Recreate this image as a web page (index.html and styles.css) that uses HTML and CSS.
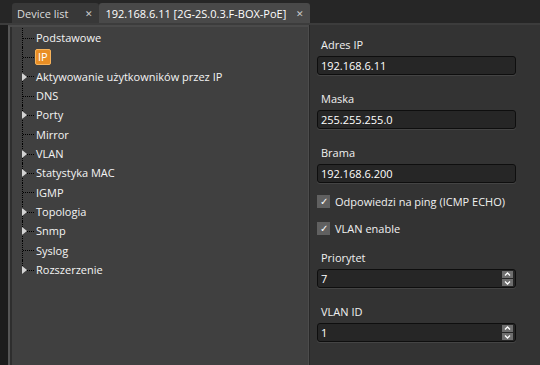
FILE: index.html
```html
<!DOCTYPE html>
<html lang="pl">
<head>
  <meta charset="UTF-8">
  <title>192.168.6.11</title>
  <link rel="stylesheet" href="styles.css">
</head>
<body>
  <div class="tabs">
    <div class="tab">Device list <span class="close">&#x2715;</span></div>
    <div class="tab active">192.168.6.11 [2G-2S.0.3.F-BOX-PoE] <span class="close">&#x2715;</span></div>
  </div>

  <div class="main">
    <div class="frame">
      <ul class="tree">
        <li class="leaf"><span class="label">Podstawowe</span></li>
        <li class="leaf"><span class="label selected">IP</span></li>
        <li class="node"><span class="label">Aktywowanie użytkowników przez IP</span></li>
        <li class="leaf"><span class="label">DNS</span></li>
        <li class="node"><span class="label">Porty</span></li>
        <li class="leaf"><span class="label">Mirror</span></li>
        <li class="node"><span class="label">VLAN</span></li>
        <li class="node"><span class="label">Statystyka MAC</span></li>
        <li class="leaf"><span class="label">IGMP</span></li>
        <li class="node"><span class="label">Topologia</span></li>
        <li class="node"><span class="label">Snmp</span></li>
        <li class="leaf"><span class="label">Syslog</span></li>
        <li class="node last"><span class="label">Rozszerzenie</span></li>
      </ul>
    </div>

    <div class="form">
      <div class="field">
        <label>Adres IP</label>
        <div class="input">192.168.6.11</div>
      </div>
      <div class="field">
        <label>Maska</label>
        <div class="input">255.255.255.0</div>
      </div>
      <div class="field">
        <label>Brama</label>
        <div class="input">192.168.6.200</div>
      </div>
      <div class="checks">
        <div class="check"><span class="box">&#x2713;</span>Odpowiedzi na ping (ICMP ECHO)</div>
        <div class="check"><span class="box">&#x2713;</span>VLAN enable</div>
      </div>
      <div class="field">
        <label>Priorytet</label>
        <div class="input">7
          <span class="arrows">
            <svg width="11" height="7" viewBox="0 0 11 7"><rect width="11" height="7" fill="#6e6e6e"/><path d="M3 4.5 L5.5 2 L8 4.5" fill="none" stroke="#fff" stroke-width="1.3"/></svg>
            <svg width="11" height="7" viewBox="0 0 11 7"><rect width="11" height="7" fill="#6e6e6e"/><path d="M3 2.5 L5.5 5 L8 2.5" fill="none" stroke="#fff" stroke-width="1.3"/></svg>
          </span>
        </div>
      </div>
      <div class="field last">
        <label>VLAN ID</label>
        <div class="input">1
          <span class="arrows">
            <svg width="11" height="7" viewBox="0 0 11 7"><rect width="11" height="7" fill="#6e6e6e"/><path d="M3 4.5 L5.5 2 L8 4.5" fill="none" stroke="#fff" stroke-width="1.3"/></svg>
            <svg width="11" height="7" viewBox="0 0 11 7"><rect width="11" height="7" fill="#6e6e6e"/><path d="M3 2.5 L5.5 5 L8 2.5" fill="none" stroke="#fff" stroke-width="1.3"/></svg>
          </span>
        </div>
      </div>
    </div>
  </div>
</body>
</html>
```

FILE: styles.css
```css
* {
  margin: 0;
  padding: 0;
  box-sizing: border-box;
}

body {
  width: 540px;
  height: 365px;
  overflow: hidden;
  background: #1c1c1c;
  color: #f0f0f0;
  font-family: "Open Sans", "Noto Sans", sans-serif;
  font-size: 11px;
}

/* Tab strip */
.tabs {
  display: flex;
  align-items: flex-end;
  height: 23px;
  padding-left: 12px;
  background: #262626;
}

.tab {
  display: flex;
  align-items: center;
  height: 20px;
  padding: 0 6px 0 5px;
  background: #383838;
  color: #dcdcdc;
  border-radius: 3px 3px 0 0;
  white-space: nowrap;
}

.tab.active {
  background: #494949;
  color: #fff;
  padding: 0 6px 0 6px;
}

.close {
  margin-left: 17px;
  font-size: 9px;
  color: #c8c8c8;
}

.tab.active .close {
  margin-left: 10px;
}

/* Main area */
.main {
  display: flex;
  height: 342px;
  padding-left: 8px;
  border-top: 2px solid #3c3c3c;
}

.frame {
  width: 301px;
  background: #404040;
  border-left: 2px solid #555;
  border-top: 2px solid #4a4a4a;
  padding-left: 2px;
  box-shadow: inset 2px 0 0 #2e2e2e, inset -1px 0 0 #4c4c4c;
}

.tree {
  list-style: none;
  padding: 1px 0 0 10px;
}

.tree li {
  position: relative;
  height: 19.35px;
  line-height: 19px;
  padding-left: 13px;
}

/* dotted connector lines */
.tree li::before {
  content: "";
  position: absolute;
  left: 0;
  top: 0;
  bottom: 0;
  border-left: 1px dotted #000;
}

.tree li.last::before {
  bottom: 50%;
}

.tree li::after {
  content: "";
  position: absolute;
  left: 1px;
  width: 11px;
  top: 50%;
  border-top: 1px dotted #000;
}

.tree li.node .label::before {
  content: "";
  position: absolute;
  left: 0;
  top: 6px;
  border-left: 5px solid #d4d4d4;
  border-top: 4px solid transparent;
  border-bottom: 4px solid transparent;
  z-index: 1;
}

.label {
  color: #f4f4f4;
  padding: 0 1px;
}

.label.selected {
  display: inline-block;
  line-height: 14px;
  padding: 0 2px;
  background: #e98e24;
  border: 1px solid #f7b35c;
  border-radius: 2px;
  color: #fff;
}

/* Properties form */
.form {
  flex: 1;
  background: #333;
  border-left: 1px solid #282828;
  padding: 8px 24px 0 7px;
}

.field {
  margin-bottom: 12px;
}

.field.last {
  margin-top: 2px;
}

.field label {
  display: block;
  padding-left: 4px;
  height: 23px;
  line-height: 23px;
  color: #f0f0f0;
}

.input {
  position: relative;
  height: 19px;
  line-height: 17px;
  padding-left: 3px;
  background: #262626;
  border: 1px solid #0e0e0e;
  border-radius: 3px;
  box-shadow: 0 1px 0 #444;
  color: #fff;
}

.arrows {
  position: absolute;
  right: 2px;
  top: 1px;
  display: flex;
  flex-direction: column;
  gap: 1px;
}

.arrows svg {
  display: block;
}

.checks {
  margin: -7px 0 4px;
}

.check {
  display: flex;
  align-items: center;
  height: 27px;
  padding-left: 0;
  white-space: nowrap;
  color: #f0f0f0;
}

.box {
  width: 13px;
  height: 13px;
  margin-right: 5px;
  background: #606060;
  color: #fff;
  font-size: 10px;
  line-height: 13px;
  text-align: center;
}
```
